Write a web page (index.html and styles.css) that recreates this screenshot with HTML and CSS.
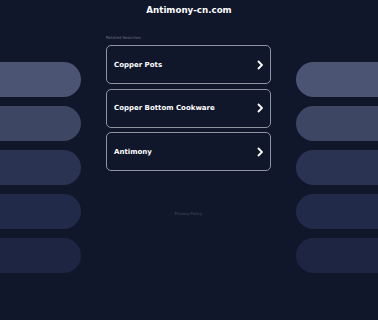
FILE: index.html
```html
<!DOCTYPE html>
<html lang="en">
<head>
    <meta charset="UTF-8">
    <meta name="viewport" content="width=device-width, initial-scale=1.0">
    <title>Antimony-cn.com</title>
    <link rel="stylesheet" href="styles.css">
</head>
<body>
    <div class="title">Antimony-cn.com</div>
    <div class="layout">
        <div class="side left">
            <div class="pill p1"></div>
            <div class="pill p2"></div>
            <div class="pill p3"></div>
            <div class="pill p4"></div>
            <div class="pill p5"></div>
        </div>
        <div class="center">
            <div class="label">Related Searches</div>
            <a class="box" href="#">
                <span>Copper Pots</span>
                <svg class="chev" viewBox="0 0 6 10" width="6" height="10"><path d="M1 1 L5 5 L1 9" fill="none" stroke="#fff" stroke-width="1.8"/></svg>
            </a>
            <a class="box" href="#">
                <span>Copper Bottom Cookware</span>
                <svg class="chev" viewBox="0 0 6 10" width="6" height="10"><path d="M1 1 L5 5 L1 9" fill="none" stroke="#fff" stroke-width="1.8"/></svg>
            </a>
            <a class="box" href="#">
                <span>Antimony</span>
                <svg class="chev" viewBox="0 0 6 10" width="6" height="10"><path d="M1 1 L5 5 L1 9" fill="none" stroke="#fff" stroke-width="1.8"/></svg>
            </a>
            <div class="privacy">Privacy Policy</div>
        </div>
        <div class="side right">
            <div class="pill p1"></div>
            <div class="pill p2"></div>
            <div class="pill p3"></div>
            <div class="pill p4"></div>
            <div class="pill p5"></div>
        </div>
    </div>
</body>
</html>
```

FILE: styles.css
```css
body{
    margin: 0;
    background-color: #11172b;
    font-family: "DejaVu Sans", Verdana, sans-serif;
    color: #fff;
}
.title{
    height: 20px;
    padding-top: 4px;
    box-sizing: border-box;
    text-align: center;
    font-size: 8.7px;
    line-height: 12px;
    font-weight: 700;
}
.layout{
    display: grid;
    grid-template-columns: 81px 165px 82px;
    column-gap: 25px;
}
.side{
    display: flex;
    flex-direction: column;
    gap: 9px;
    padding-top: 42px;
}
.pill{
    height: 35px;
}
.left .pill{
    border-radius: 0 18px 18px 0;
}
.right .pill{
    border-radius: 18px 0 0 18px;
}
.p1{ background-color: #4b5573; }
.p2{ background-color: #3d4663; }
.p3{ background-color: #2a3351; }
.p4{ background-color: #222a49; }
.p5{ background-color: #1d2543; }

.center{
    padding-top: 15px;
    display: flex;
    flex-direction: column;
}
.label{
    font-size: 4px;
    line-height: 6px;
    color: #6b7085;
    margin-bottom: 4px;
}
.box{
    display: flex;
    align-items: center;
    justify-content: space-between;
    height: 39px;
    box-sizing: border-box;
    border: 1.5px solid #8f939d;
    border-radius: 5px;
    padding: 0 7px 0 7px;
    margin-bottom: 4.5px;
    color: #fff;
    text-decoration: none;
    font-size: 7px;
    font-weight: 700;
}
.chev{
    display: block;
}
.privacy{
    margin-top: 35px;
    text-align: center;
    font-size: 4px;
    line-height: 6px;
    color: #4a5068;
}
```
